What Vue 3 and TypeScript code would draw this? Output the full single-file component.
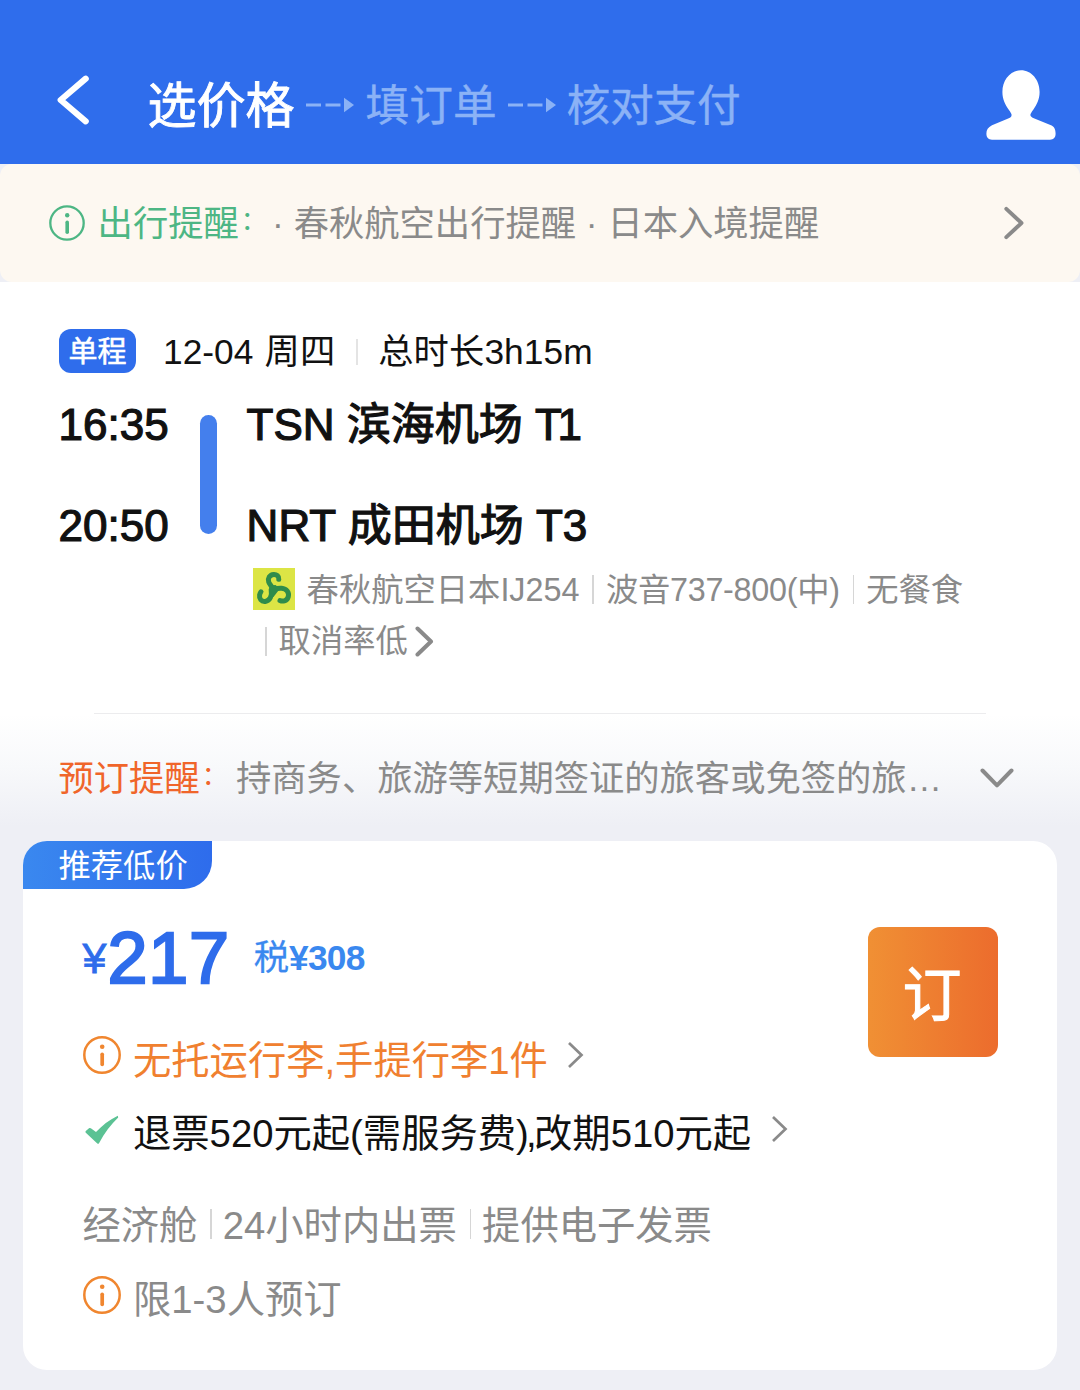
<script setup lang="ts">
interface Stop {
  time: string
  airport: string
  terminal: string
  tight: boolean
}
const stops: Stop[] = [
  { time: '16:35', airport: 'TSN 滨海机场', terminal: '1', tight: true },
  { time: '20:50', airport: 'NRT 成田机场', terminal: '3', tight: false },
]
const ticketInfo: string[] = ['经济舱', '24小时内出票', '提供电子发票']
</script>

<template>
  <div class="page">
    <header class="header">
      <svg class="back" width="34" height="52" viewBox="0 0 34 52">
        <path d="M28.700 4.700 3.700 26l25 21.300" fill="none" stroke="#fff" stroke-width="6.200" stroke-linecap="round" stroke-linejoin="round" />
      </svg>
      <span class="step active">选价格</span>
      <svg class="dash" width="49" height="16" viewBox="0 0 49 16">
        <path d="M0 8h15M19.500 8h15" stroke="#8bb2f6" stroke-width="3" />
        <path d="M38 .7 48 8l-10 7.300z" fill="#8bb2f6" />
      </svg>
      <span class="step">填订单</span>
      <svg class="dash" width="49" height="16" viewBox="0 0 49 16">
        <path d="M0 8h15M19.500 8h15" stroke="#8bb2f6" stroke-width="3" />
        <path d="M38 .7 48 8l-10 7.300z" fill="#8bb2f6" />
      </svg>
      <span class="step last">核对支付</span>
      <svg class="user" width="70" height="70" viewBox="0 0 70 70">
        <path d="M35 .3C24.500 .3 16.400 10 16.400 22c0 7.500 3 12.800 6 17.200 2.300 3.300 3.200 4.500 3.200 5.800 0 2-1.300 2.500-4 3.800L6 55.300C2 57.300.4 60 .4 63.500c0 4 2 6.200 5.600 6.200h58c3.600 0 5.600-2.200 5.600-6.200 0-4.500-1.600-7.200-5.200-8.500L48.400 48.500c-2.700-1.200-4-2-4-3.500 0-1.300.9-2.500 3.200-5.800 3-4.400 6-9.700 6-17.200C53.600 10 45.500.3 35 .3z" fill="#fff" />
      </svg>
    </header>

    <section class="notice">
      <svg class="notice-icon" width="36" height="36" viewBox="0 0 36 36">
        <circle cx="18" cy="18" r="16.700" fill="none" stroke="#4db684" stroke-width="2.300" />
        <circle cx="18.200" cy="10.300" r="2.200" fill="#4db684" />
        <path d="M18.200 17.300v10" stroke="#4db684" stroke-width="3.600" stroke-linecap="round" />
      </svg>
      <span class="notice-label">出行提醒<span class="colon">：</span></span>
      <span class="notice-text">· 春秋航空出行提醒 · 日本入境提醒</span>
      <svg class="notice-arrow" width="20" height="34" viewBox="0 0 20 34">
        <path d="M2.300 2.800 17.500 17 2.300 31.200" fill="none" stroke="#8a8a8a" stroke-width="3.900" stroke-linecap="round" stroke-linejoin="round" />
      </svg>
    </section>

    <section class="flight">
      <div class="date-row">
        <span class="badge">单程</span>
        <span class="date">12-04 周四</span>
        <i class="sep date-sep"></i>
        <span class="duration">总时长3h15m</span>
      </div>
      <div class="route">
        <div class="stops">
          <span v-for="s in stops" :key="s.time">{{ s.time }}</span>
        </div>
        <i class="bar"></i>
        <div class="places">
          <div class="stops">
            <span v-for="s in stops" :key="s.airport">{{ s.airport }} <span :class="{ kern: s.tight }">T</span>{{ s.terminal }}</span>
          </div>
          <div class="detail">
            <svg class="airline" width="42" height="42" viewBox="0 0 42 42">
              <rect width="42" height="42" fill="#dce545" />
              <g fill="none" stroke="#2f8c4b" stroke-width="5" stroke-linecap="round" stroke-linejoin="round">
                <path d="M25.800 11.300C26.200 8.300 23.500 6.200 20.700 6.400c-4 .3-6.200 4-5 7.600.9 2.600 3.500 4.500 4.300 7.500" />
                <path d="M18.200 22c1 6-1.200 10.800-5.900 11.400-4 .5-6.300-2.800-5.700-6.400.2-1.300.6-2.200 1.400-3.200" />
                <path d="M21.500 21.500c4.500-2 10.200-1.700 12.700 1.500 2.600 3.500 1.200 8.600-2.800 9.800-1.600.5-3 .4-4.400-.3" />
              </g>
              <path d="M16.500 17.500 22.500 17 27 20.500 20.500 29 16.500 28z" fill="#2f8c4b" />
            </svg>
            <span>春秋航空日本IJ254</span>
            <i class="sep"></i>
            <span class="aircraft">波音737-800(中)</span>
            <i class="sep"></i>
            <span>无餐食</span>
          </div>
          <div class="detail second">
            <i class="sep"></i>
            <span>取消率低</span>
            <svg width="19" height="31" viewBox="0 0 19 31">
              <path d="M2.500 2.500 16 15.500 2.500 28.500" fill="none" stroke="#8a8a8a" stroke-width="4" stroke-linecap="round" stroke-linejoin="round" />
            </svg>
          </div>
        </div>
      </div>
      <div class="divider"></div>
    </section>

    <section class="reminder">
      <span class="reminder-label">预订提醒<span class="colon">：</span></span>
      <span class="reminder-text">持商务、旅游等短期签证的旅客或免签的旅…</span>
      <svg class="down" width="34" height="20" viewBox="0 0 34 20">
        <path d="M2.500 2.500 17 17.300 31.500 2.500" fill="none" stroke="#8a8a8a" stroke-width="4" stroke-linecap="round" stroke-linejoin="round" />
      </svg>
    </section>

    <article class="card">
      <div class="tag">推荐低价</div>
      <div class="card-body">
        <div class="info">
          <div class="price-row">
            <span class="yen">¥</span><span class="price">217</span>
            <span class="tax">税<b>¥308</b></span>
          </div>
          <div class="line orange">
            <svg class="tip" width="38" height="38" viewBox="0 0 38 38">
              <circle cx="19" cy="19" r="17.700" fill="none" stroke="#f0862f" stroke-width="2.500" />
              <circle cx="19.200" cy="10.800" r="2.300" fill="#f0862f" />
              <path d="M19.200 18.300v10" stroke="#f0862f" stroke-width="3.700" stroke-linecap="round" />
            </svg>
            <span>无托运行李,手提行李1件</span>
            <svg class="more" width="17" height="28" viewBox="0 0 17 28">
              <path d="M2 2 14.500 14 2 26" fill="none" stroke="#8a8a8a" stroke-width="2.700" />
            </svg>
          </div>
          <div class="line dark">
            <svg class="check" width="38" height="30" viewBox="0 0 38 30">
              <path d="M2.800 16 6 13.300c.8-.6 1.400-.5 2.200.1l4.800 3.600C19 10.800 26 4.900 34.800.8l.4 1.800C28 9.500 21.500 18 16 28.300c-.4.700-1.200.7-1.700.1L2.800 17.700c-.5-.5-.5-1.200 0-1.700z" fill="#5bc294" />
            </svg>
            <span>退票520元起(需服务费<span class="tight">),</span>改期510元起</span>
            <svg class="more second-more" width="17" height="28" viewBox="0 0 17 28">
              <path d="M2 2 14.500 14 2 26" fill="none" stroke="#8a8a8a" stroke-width="2.700" />
            </svg>
          </div>
          <div class="line ticket">
            <template v-for="(t, i) in ticketInfo" :key="t">
              <i v-if="i > 0" class="sep"></i>
              <span>{{ t }}</span>
            </template>
          </div>
          <div class="line limit">
            <svg class="tip" width="38" height="38" viewBox="0 0 38 38">
              <circle cx="19" cy="19" r="17.700" fill="none" stroke="#f0862f" stroke-width="2.500" />
              <circle cx="19.200" cy="10.800" r="2.300" fill="#f0862f" />
              <path d="M19.200 18.300v10" stroke="#f0862f" stroke-width="3.700" stroke-linecap="round" />
            </svg>
            <span>限1-3人预订</span>
          </div>
        </div>
        <button class="book" type="button">订</button>
      </div>
    </article>
  </div>
</template>

<style>
body {
  background: #eeeff5;
}
</style>

<style scoped>
.page {
  width: 1080px;
  height: 1390px;
  overflow: hidden;
  background: #eeeff5;
  font-family: "Liberation Sans", "Noto Sans CJK SC", sans-serif;
  font-size: 35.3px;
  color: #111;
}
.page * {
  box-sizing: border-box;
}
.page span {
  white-space: nowrap;
}
svg {
  display: block;
  flex: none;
}
.header {
  display: flex;
  align-items: center;
  height: 164px;
  padding: 49px 24px 0 57px;
  background: #2f6dec;
}
.back {
  margin: 0 56.500px 13px 0;
}
.step {
  margin-bottom: 2px;
  font-size: 43.700px;
  line-height: 60px;
  color: #8bb2f6;
  -webkit-text-stroke: 0.400px #8bb2f6;
}
.step.active {
  margin-bottom: 1.500px;
  font-size: 49px;
  color: #fff;
  -webkit-text-stroke: 0.900px #fff;
}
.step.last {
  margin-left: -1px;
  letter-spacing: -0.200px;
}
.dash {
  margin: 0 10.500px 3px 11.500px;
}
.user {
  margin: 0 0 4px auto;
}
.notice {
  display: flex;
  align-items: center;
  height: 118px;
  padding: 0 56px 0 48.600px;
  border-radius: 12px;
  background: #fdf8f1;
  line-height: 50px;
}
.notice-icon {
  margin-bottom: 1px;
}
.notice-label {
  width: 174.500px;
  height: 50px;
  margin: 1px 0 0 13px;
  color: #4db684;
}
.colon {
  display: inline-block;
  height: 50px;
  margin-left: 2px;
  font-size: 26px;
  line-height: 45px;
  vertical-align: top;
}
.notice-text {
  margin-top: 2px;
  color: #8a8a8a;
}
.notice-arrow {
  margin: 0 0 1px auto;
}
.flight {
  height: 432px;
  padding-top: 47px;
  background: #fff;
}
.date-row {
  display: flex;
  align-items: center;
  height: 45px;
  padding-left: 59px;
  line-height: 44px;
}
.badge {
  width: 77px;
  height: 44px;
  margin-bottom: 1px;
  border-radius: 12px;
  background: #2f6dec;
  color: #fff;
  font-size: 29px;
  line-height: 46px;
  text-align: center;
  -webkit-text-stroke: 0.600px #fff;
}
.date {
  margin: 1px 0 0 27px;
  word-spacing: 1.500px;
}
.sep {
  flex: none;
  width: 1.500px;
  height: 29px;
  background: #d6d6d6;
}
.date-sep {
  height: 26px;
  margin: 0 20.500px 0 21px;
  background: #e4e4e4;
}
.duration {
  margin-top: 1px;
  letter-spacing: 0.100px;
}
.route {
  display: flex;
  align-items: flex-start;
  margin-top: 25px;
  padding-left: 58.500px;
}
.stops {
  display: flex;
  flex-direction: column;
  gap: 49px;
  font-size: 44px;
  line-height: 52px;
  -webkit-text-stroke: 1.200px #111;
}
.kern {
  letter-spacing: -4.500px;
}
.bar {
  width: 17px;
  height: 119px;
  margin: 16px 30px 0 31px;
  border-radius: 9px;
  background: #447fed;
}
.detail {
  display: flex;
  align-items: center;
  height: 52px;
  margin-top: 11px;
  padding-left: 6.500px;
  color: #8a8a8a;
  font-size: 32.300px;
  line-height: 52px;
}
.detail span {
  margin-top: 1px;
}
.detail .sep {
  margin: 0 12px 0 13px;
}
.airline {
  margin-right: 11.500px;
}
.aircraft {
  letter-spacing: -0.260px;
}
.detail.second {
  margin-top: 0;
  padding-left: 5.500px;
}
.detail.second span {
  margin-top: 0;
}
.detail.second svg {
  margin-left: 7px;
}
.divider {
  height: 1px;
  margin: 46px 94px 0;
  background: #ececee;
}
.reminder {
  display: flex;
  align-items: center;
  height: 127px;
  padding: 0 66px 0 58.500px;
  background: linear-gradient(180deg, #fff 0%, #f8f9fb 42%, #eeeff5 88%);
  line-height: 50px;
}
.reminder-label {
  width: 177.500px;
  height: 50px;
  margin-top: 3px;
  color: #f0652a;
}
.reminder-text {
  margin-top: 3px;
  color: #8a8a8a;
}
.down {
  margin-left: auto;
}
.card {
  width: 1034px;
  height: 529px;
  margin-left: 23px;
  border-radius: 24px;
  background: #fff;
}
.tag {
  width: 189px;
  height: 47.500px;
  padding-left: 35.500px;
  border-radius: 24px 0 28px 0;
  background: linear-gradient(90deg, #3a88ef, #2e6cec);
  color: #fff;
  font-size: 32.300px;
  line-height: 51px;
}
.card-body {
  display: flex;
  justify-content: space-between;
  align-items: flex-start;
  padding: 0 59.500px 0 59.500px;
}
.price-row {
  display: flex;
  align-items: center;
  height: 73px;
  margin-top: 33.500px;
  color: #2e6ceb;
}
.yen {
  width: 25px;
  font-size: 43px;
  -webkit-text-stroke: 0.800px #2e6ceb;
}
.price {
  font-size: 72px;
  line-height: 73px;
  letter-spacing: 0.700px;
  -webkit-text-stroke: 2.300px #2e6ceb;
}
.tax {
  margin: 0 0 1px 24px;
  color: #3a88ef;
  line-height: 50px;
  -webkit-text-stroke: 0.300px #3a88ef;
}
.tax b {
  letter-spacing: -0.750px;
  -webkit-text-stroke: 0;
}
.line {
  display: flex;
  align-items: center;
  height: 73px;
  font-size: 38.300px;
  line-height: 73px;
  color: #8a8a8a;
}
.line > span {
  margin-top: 2px;
}
.orange {
  margin-top: 28px;
}
.orange span {
  color: #f0802f;
}
.dark {
  color: #111;
}
.tip {
  margin: 0 12.500px 9px 0;
}
.check {
  margin: 0 12.500px 6px 0;
}
.tight {
  letter-spacing: -2.700px;
}
.more {
  margin: 0 0 9px 19.500px;
}
.second-more {
  margin: 0 0 7px 20px;
}
.ticket {
  margin-top: 20px;
}
.line.ticket > span,
.line.limit > span {
  margin-top: 0.500px;
}
.ticket .sep {
  height: 30px;
  margin: 0 11px 3px 12.800px;
}
.limit {
  margin-top: 1px;
}
.book {
  flex: none;
  width: 130px;
  height: 130px;
  margin-top: 38.500px;
  padding: 9px 1px 0 0;
  border: 0;
  border-radius: 12px;
  background: linear-gradient(90deg, #f09034, #ec6c2d);
  color: #fff;
  font-family: inherit;
  font-size: 59px;
  line-height: 121px;
  -webkit-text-stroke: 1px #fff;
}
</style>
